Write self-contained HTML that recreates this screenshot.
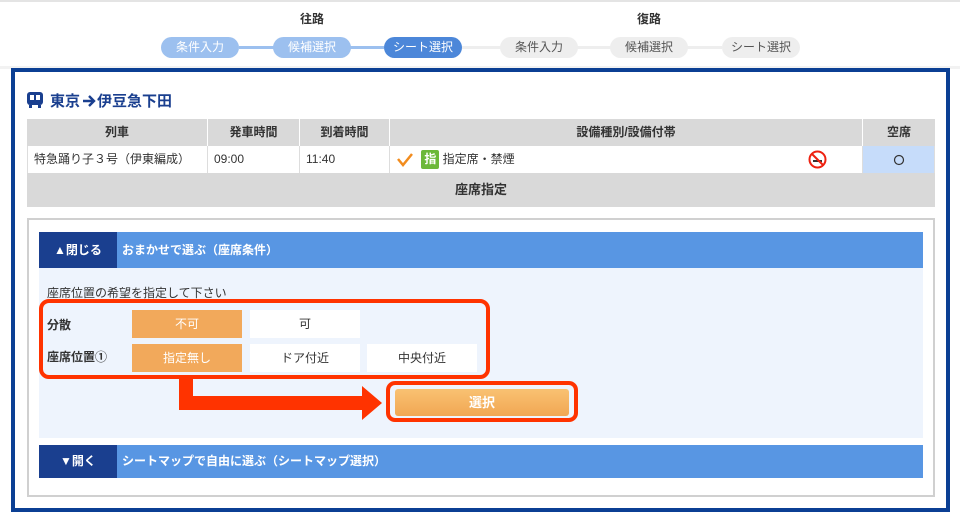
<!DOCTYPE html>
<html><head><meta charset="utf-8"><style>
*{margin:0;padding:0;box-sizing:border-box}
body{width:960px;height:522px;background:#fff;font-family:"Liberation Sans","Noto Sans CJK JP",sans-serif;position:relative;overflow:hidden;font-size:12px;color:#333}
.a{position:absolute}
.pill{position:absolute;top:37px;height:21px;width:78px;border-radius:11px;text-align:center;line-height:21px;font-size:12px}
.pb{background:#9cc0ef;color:#fff}.pd{background:#4c87d9;color:#fff}.pg{background:#eee;color:#555}
.ln{position:absolute;top:46px;height:3px}
.th{position:absolute;top:119px;height:27px;background:#d9d9d9;font-weight:bold;text-align:center;line-height:27px;font-size:12px;border-right:1px solid #fff}
.td{position:absolute;top:146px;height:27px;line-height:27px;background:#fff;border-right:1px solid #ddd;font-size:12px;padding-left:6px}
.btn{position:absolute;width:110px;height:28px;line-height:28px;text-align:center;font-size:12px}
.o{background:#f2a95b;color:#fff}.w{background:#fff;color:#333}
</style></head><body>
<div class="a" style="left:0;top:0;width:960px;height:2px;background:#e4e4e4"></div>
<div class="a" style="left:300px;top:10px;font-size:12px;font-weight:bold">往路</div>
<div class="a" style="left:637px;top:10px;font-size:12px;font-weight:bold">復路</div>
<div class="ln" style="left:239px;width:145px;background:#9cc0ef"></div>
<div class="ln" style="left:462px;width:260px;background:#eee"></div>
<div class="pill pb" style="left:161px">条件入力</div>
<div class="pill pb" style="left:273px">候補選択</div>
<div class="pill pd" style="left:384px">シート選択</div>
<div class="pill pg" style="left:500px">条件入力</div>
<div class="pill pg" style="left:610px">候補選択</div>
<div class="pill pg" style="left:722px">シート選択</div>
<div class="a" style="left:0;top:66px;width:960px;height:3px;background:#f2f2f2"></div>
<div class="a" style="left:11px;top:68px;width:939px;height:444px;border:4px solid #0b3f94"></div>
<svg class="a" style="left:26px;top:91px" width="18" height="18" viewBox="0 0 18 18"><rect x="1" y="1" width="16" height="13" rx="3" fill="#1a3f8f"/><rect x="4" y="4" width="4" height="5" fill="#fff"/><rect x="10" y="4" width="4" height="5" fill="#fff"/><rect x="3" y="14" width="3" height="3" fill="#1a3f8f"/><rect x="12" y="14" width="3" height="3" fill="#1a3f8f"/></svg>
<div class="a" style="left:50px;top:90px;font-size:15px;font-weight:bold;color:#1a3f8f">東京</div>
<svg class="a" style="left:82px;top:94px" width="14" height="14" viewBox="0 0 14 14"><path d="M1 7H12M7 2L12 7L7 12" stroke="#1a3f8f" stroke-width="2.4" fill="none"/></svg>
<div class="a" style="left:97px;top:90px;font-size:15px;font-weight:bold;color:#1a3f8f">伊豆急下田</div>
<div class="th" style="left:27px;width:181px">列車</div>
<div class="th" style="left:208px;width:92px">発車時間</div>
<div class="th" style="left:300px;width:90px">到着時間</div>
<div class="th" style="left:390px;width:473px">設備種別/設備付帯</div>
<div class="th" style="left:863px;width:72px;border-right:0">空席</div>
<div class="td" style="left:27px;width:181px;border-left:1px solid #ddd">特急踊り子３号（伊東編成）</div>
<div class="td" style="left:208px;width:92px">09:00</div>
<div class="td" style="left:300px;width:90px">11:40</div>
<div class="td" style="left:390px;width:473px"><svg width="18" height="14" viewBox="0 0 18 14" style="vertical-align:middle"><path d="M2 6L7 12L16 1" stroke="#f28c1e" stroke-width="2.5" fill="none"/></svg> <span style="display:inline-block;background:#6cb83a;color:#fff;font-weight:bold;width:18px;height:19px;line-height:19px;text-align:center;border-radius:2px;margin-left:4px">指</span> 指定席・禁煙</div>
<svg class="a" style="left:808px;top:150px" width="19" height="19" viewBox="0 0 19 19"><circle cx="9.5" cy="9.5" r="8" fill="#fff" stroke="#e21" stroke-width="2"/><rect x="5" y="10" width="9" height="2" fill="#333"/><line x1="4" y1="4" x2="15" y2="15" stroke="#e21" stroke-width="2"/></svg>
<div class="td" style="left:863px;width:72px;background:#c6dcfa;text-align:center;padding:0"><svg width="12" height="12" style="vertical-align:middle"><circle cx="6" cy="6" r="4.5" stroke="#333" stroke-width="1.2" fill="none"/></svg></div>
<div class="a" style="left:27px;top:173px;width:908px;height:34px;background:#d9d9d9;text-align:center;line-height:34px;font-weight:bold;font-size:13px">座席指定</div>
<div class="a" style="left:27px;top:218px;width:908px;height:279px;border:2px solid #d0d0d0"></div>
<div class="a" style="left:39px;top:232px;width:884px;height:36px;background:#5896e3"></div>
<div class="a" style="left:39px;top:232px;width:78px;height:36px;background:#1a3f8f;color:#fff;font-weight:bold;line-height:36px;text-align:center;font-size:12px">▲閉じる</div>
<div class="a" style="left:122px;top:232px;line-height:36px;color:#fff;font-weight:bold;font-size:12px">おまかせで選ぶ（座席条件）</div>
<div class="a" style="left:39px;top:268px;width:884px;height:170px;background:#eef4fd"></div>
<div class="a" style="left:47px;top:284px;font-size:12px">座席位置の希望を指定して下さい</div>
<div class="a" style="left:39px;top:299px;width:451px;height:80px;border:4px solid #ff3300;border-radius:10px"></div>
<div class="a" style="left:47px;top:316px;font-weight:bold">分散</div>
<div class="a" style="left:47px;top:348px;font-weight:bold">座席位置①</div>
<div class="btn o" style="left:132px;top:310px">不可</div>
<div class="btn w" style="left:250px;top:310px">可</div>
<div class="btn o" style="left:132px;top:344px">指定無し</div>
<div class="btn w" style="left:250px;top:344px">ドア付近</div>
<div class="btn w" style="left:367px;top:344px">中央付近</div>
<div class="a" style="left:179px;top:378px;width:14px;height:32px;background:#ff3300"></div>
<div class="a" style="left:179px;top:396px;width:185px;height:14px;background:#ff3300"></div>
<svg class="a" style="left:362px;top:386px" width="20" height="38"><polygon points="0,0 20,17 0,34" fill="#ff3300"/></svg>
<div class="a" style="left:386px;top:381px;width:192px;height:41px;border:4px solid #ff3300;border-radius:9px"></div>
<div class="a" style="left:395px;top:389px;width:174px;height:27px;background:linear-gradient(#f9c272,#f1a753);border-radius:3px;color:#fff;font-weight:bold;text-align:center;line-height:27px;font-size:13px">選択</div>
<div class="a" style="left:39px;top:445px;width:884px;height:33px;background:#5896e3"></div>
<div class="a" style="left:39px;top:445px;width:78px;height:33px;background:#1a3f8f;color:#fff;font-weight:bold;line-height:33px;text-align:center">▼開く</div>
<div class="a" style="left:122px;top:445px;line-height:33px;color:#fff;font-weight:bold">シートマップで自由に選ぶ（シートマップ選択）</div>
</body></html>
